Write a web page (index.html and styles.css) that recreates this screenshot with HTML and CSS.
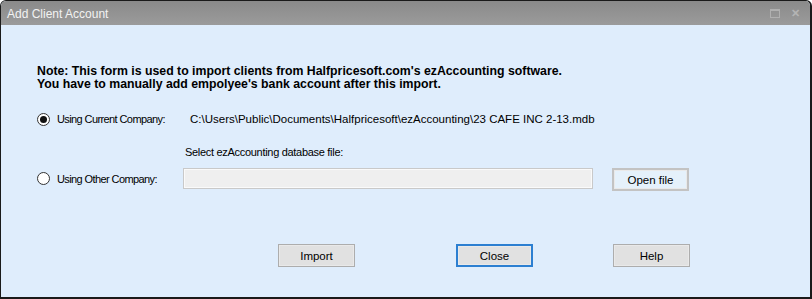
FILE: index.html
```html
<!DOCTYPE html>
<html lang="en">
<head>
  <meta charset="UTF-8">
  <meta name="viewport" content="width=device-width, initial-scale=1.0">
  <title>Add Client Account</title>
  <link rel="stylesheet" href="styles.css">
</head>
<body>
  <div class="window">
    <div class="titlebar">
      <span class="title">Add Client Account</span>
      <div class="title-buttons">
        <span class="tb-max"></span>
        <span class="tb-close">&#x2715;</span>
      </div>
    </div>

    <div class="content">
      <p class="note">
        Note: This form is used to import clients from Halfpricesoft.com's ezAccounting software.<br>
        You have to manually add empolyee's bank account after this import.
      </p>

      <!-- Compagnie courante -->
      <div class="row row-current">
        <label class="radio-label"><span class="radio checked"></span>Using Current Company:</label>
        <span class="path">C:\Users\Public\Documents\Halfpricesoft\ezAccounting\23 CAFE INC 2-13.mdb</span>
      </div>

      <div class="select-label">Select ezAccounting database file:</div>

      <!-- Autre compagnie -->
      <div class="row row-other">
        <label class="radio-label"><span class="radio"></span>Using Other Company:</label>
        <div class="file-input"></div>
        <button class="btn btn-open">Open file</button>
      </div>

      <div class="actions">
        <button class="btn">Import</button>
        <button class="btn btn-default">Close</button>
        <button class="btn">Help</button>
      </div>
    </div>
  </div>
</body>
</html>
```

FILE: styles.css
```css
body {
  margin: 0;
  background-color: #ffffff;
  font-family: "Liberation Sans", Arial, sans-serif;
  font-size: 11px;
  color: #000;
}
.window {
  width: 812px;
  height: 299px;
  box-sizing: border-box;
  border: 1px solid #1a1a1a;
  border-right-width: 2px;
  border-bottom-width: 2px;
  border-radius: 6px 6px 0 0;
  background-color: #dfedfc;
  overflow: hidden;
}
.titlebar {
  height: 24px;
  display: flex;
  align-items: center;
  justify-content: space-between;
  padding: 0 6px;
  background: linear-gradient(#8a8a8a, #9b9b9b);
}
.title {
  color: #f2f2f2;
  font-size: 12px;
  padding-top: 1px;
}
.title-buttons {
  display: flex;
  align-items: center;
  gap: 11px;
  padding-right: 4px;
}
.tb-max {
  width: 8px;
  height: 6px;
  border: 1px solid #b0b0b0;
  border-top-width: 2px;
}
.tb-close {
  color: #b4b4b4;
  font-size: 11px;
  font-weight: bold;
}
.content {
  padding: 40px 0 0 36px;
}
.note {
  margin: 0;
  font-weight: bold;
  font-size: 12.3px;
  line-height: 13px;
}
.row {
  display: flex;
  align-items: center;
}
.row-current {
  margin-top: 18px;
  height: 20px;
}
.radio-label {
  display: flex;
  align-items: center;
  width: 146px;
  letter-spacing: -0.6px;
}
.radio {
  width: 11px;
  height: 11px;
  border: 1px solid #333;
  border-radius: 50%;
  background-color: #fff;
  margin-right: 7px;
  display: flex;
  align-items: center;
  justify-content: center;
}
.radio.checked::after {
  content: "";
  width: 7px;
  height: 7px;
  border-radius: 50%;
  background-color: #111;
}
.path {
  margin-left: 7px;
  font-size: 11.5px;
}
.select-label {
  margin: 16px 0 0 148px;
  line-height: 14px;
  letter-spacing: -0.3px;
}
.row-other {
  margin-top: 7px;
}
.file-input {
  width: 408px;
  height: 19px;
  background-color: #efefef;
  border: 1px solid #c9c9c9;
  box-shadow: inset 0 0 0 1px #fafafa;
}
.btn {
  width: 77px;
  height: 23px;
  padding: 0;
  font-family: inherit;
  font-size: 11.5px;
  color: #000;
  background-color: #e1e1e1;
  border: 1px solid #adadad;
  box-shadow: inset 0 0 0 1px #e9e9e9;
}
.btn-open {
  margin-left: 19px;
  margin-top: 2px;
  border: 2px solid #c3c3c3;
  background-color: #e5f1fb;
}
.btn-default {
  border: 2px solid #2c7fd1;
}
.actions {
  display: flex;
  gap: 101px;
  margin: 53px 0 0 241px;
}
.actions .btn + .btn + .btn {
  margin-left: -21px;
}
```
